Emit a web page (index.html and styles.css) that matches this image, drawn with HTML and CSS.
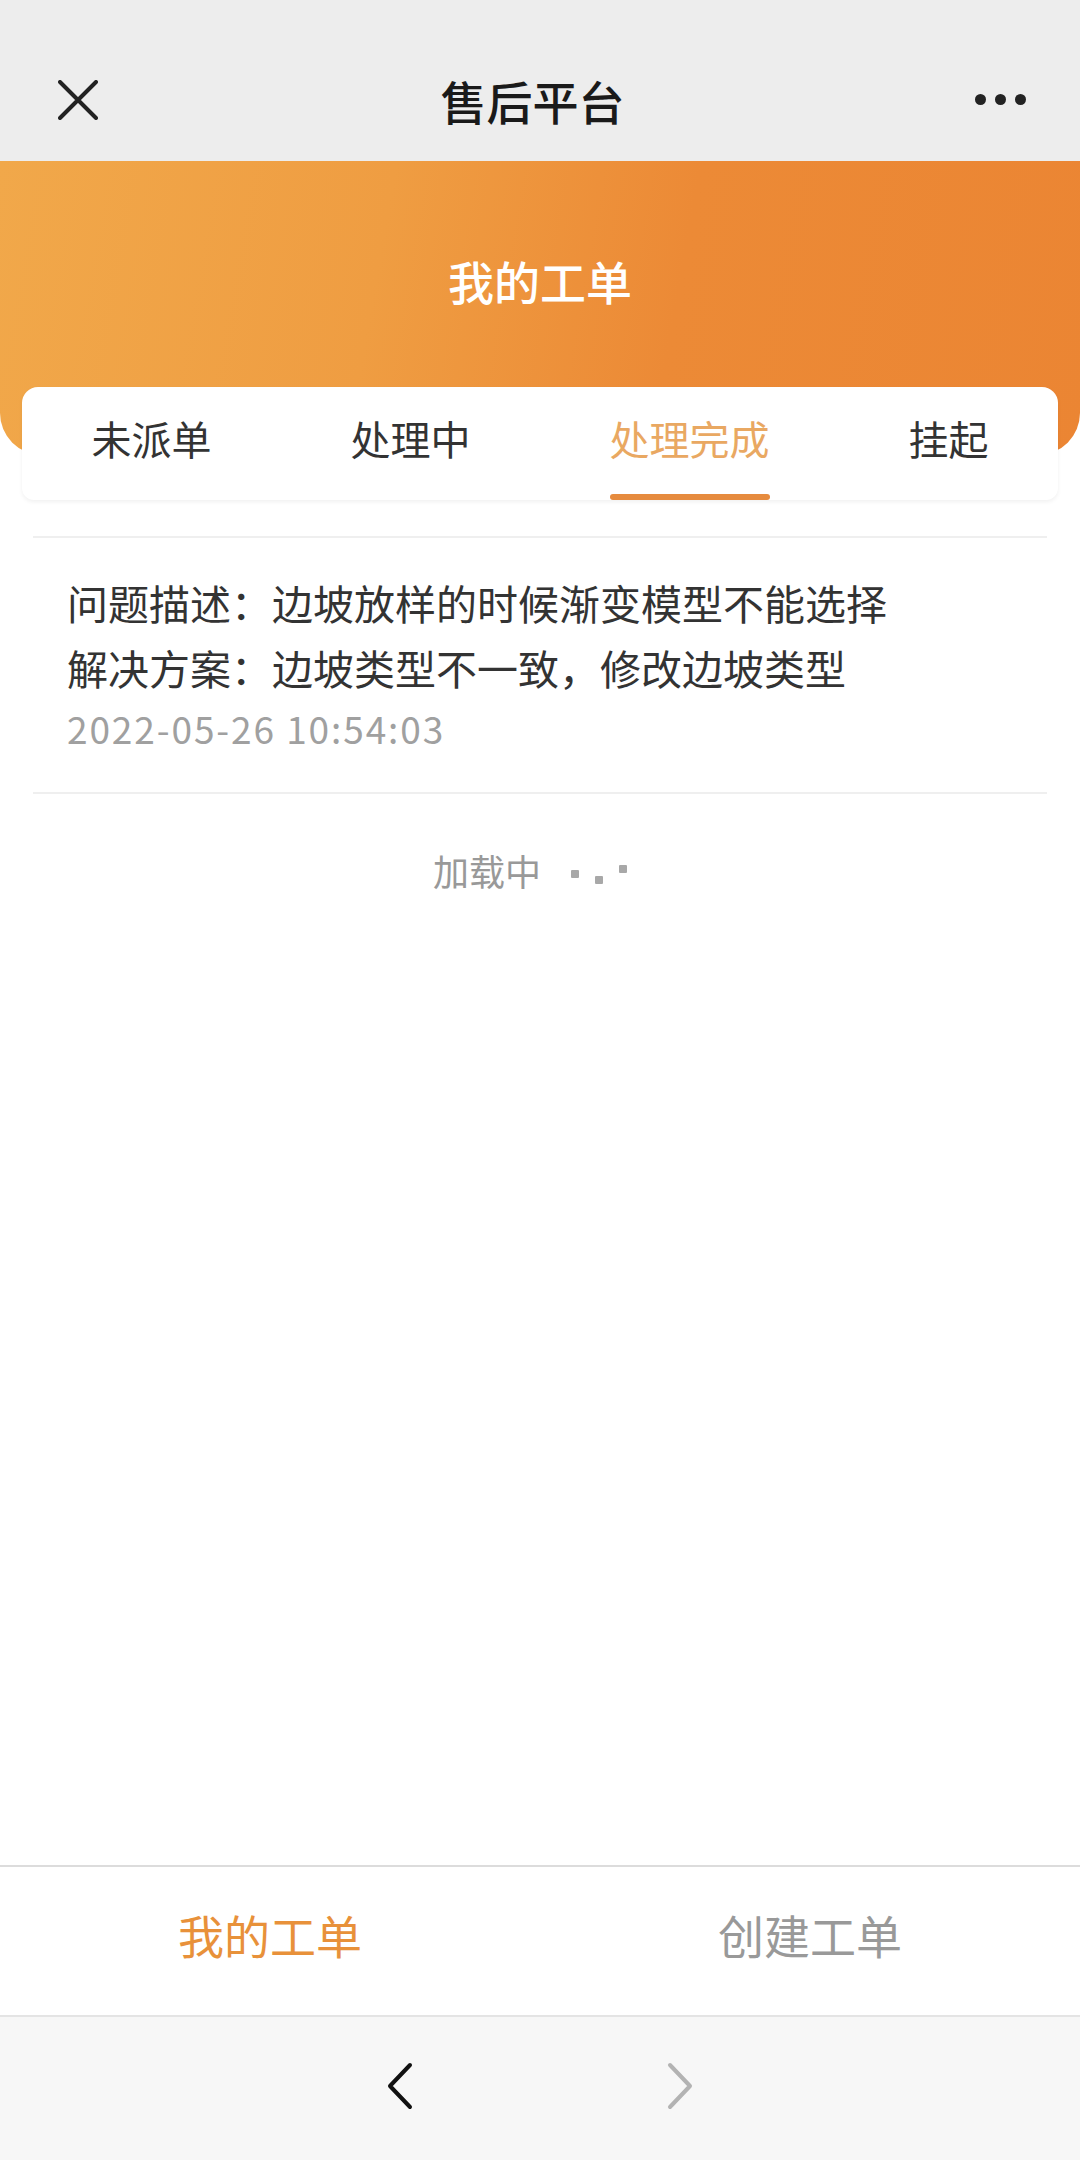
FILE: index.html
```html
<!DOCTYPE html>
<html lang="zh-CN">
<head>
  <meta charset="UTF-8" />
  <meta name="viewport" content="width=device-width, initial-scale=1.0"/>
  <title>售后平台</title>
  <link rel="stylesheet" href="styles.css">
</head>
<body>
<div class="page">

  <div class="navbar">
    <svg class="nav-close" width="40" height="40" viewBox="0 0 40 40">
      <path d="M2 2 L38 38 M38 2 L2 38" stroke="#222" stroke-width="4" stroke-linecap="round" fill="none"/>
    </svg>
    <div class="nav-title">售后平台</div>
    <div class="nav-more"><span></span><span></span><span></span></div>
  </div>

  <div class="banner">
    <div class="banner-title">我的工单</div>
  </div>

  <div class="tabs">
    <div class="tab">未派单<i></i></div>
    <div class="tab">处理中<i></i></div>
    <div class="tab active">处理完成<i></i></div>
    <div class="tab">挂起<i></i></div>
  </div>

  <div class="list">
    <div class="item">
      <div class="line">问题描述：边坡放样的时候渐变模型不能选择</div>
      <div class="line">解决方案：边坡类型不一致，修改边坡类型</div>
      <div class="date">2022-05-26 10:54:03</div>
    </div>
    <div class="loading">
      加载中
      <span class="dots"><b class="d1"></b><b class="d2"></b><b class="d3"></b></span>
    </div>
  </div>

  <div class="tabbar">
    <div class="tabbar-item active">我的工单</div>
    <div class="tabbar-item">创建工单</div>
  </div>

  <div class="toolbar">
    <svg width="28" height="48" viewBox="0 0 28 48">
      <path d="M24 3 L4 24 L24 45" stroke="#111" stroke-width="4" stroke-linecap="round" stroke-linejoin="round" fill="none"/>
    </svg>
    <svg width="28" height="48" viewBox="0 0 28 48">
      <path d="M4 3 L24 24 L4 45" stroke="#b3b3b3" stroke-width="4" stroke-linecap="round" stroke-linejoin="round" fill="none"/>
    </svg>
  </div>

</div>
</body>
</html>
```

FILE: styles.css
```css
body {
  margin: 0;
  font-family: "Noto Sans CJK SC", "Noto Sans", sans-serif;
  background: #fff;
  color: #333;
}
.page {
  display: flex;
  flex-direction: column;
  height: 2160px;
  overflow: hidden;
}

/* top bar */
.navbar {
  height: 161px;
  flex-shrink: 0;
  background: #ededed;
  display: flex;
  align-items: center;
  padding: 38px 54px 0 58px;
  box-sizing: border-box;
}
.nav-close {
  flex-shrink: 0;
}
.nav-title {
  flex: 1;
  text-align: center;
  font-size: 46px;
  font-weight: 500;
  color: #1a1a1a;
  margin-right: 8px;
}
.nav-more {
  display: flex;
  gap: 9px;
}
.nav-more span {
  width: 11px;
  height: 11px;
  border-radius: 50%;
  background: #222;
}

/* orange header */
.banner {
  height: 294px;
  flex-shrink: 0;
  background: linear-gradient(100deg, #f1a84a 0%, #ef9d42 35%, #ec8a36 62%, #eb8533 100%);
  border-radius: 0 0 42px 42px;
  display: flex;
  justify-content: center;
  padding-top: 90px;
  box-sizing: border-box;
}
.banner-title {
  font-size: 46px;
  line-height: 58px;
  font-weight: 500;
  color: #fff;
}

/* tabs card */
.tabs {
  margin: -68px 22px 0;
  height: 113px;
  flex-shrink: 0;
  background: #fff;
  border-radius: 16px 16px 12px 12px;
  box-shadow: 0 2px 4px rgba(0,0,0,0.06);
  display: flex;
  justify-content: space-around;
}
.tab {
  display: flex;
  flex-direction: column;
  align-items: stretch;
  padding-top: 31px;
  font-size: 40px;
  line-height: 40px;
  color: #333;
}
.tab i {
  display: block;
  height: 6px;
  margin-top: 36px;
  border-radius: 3px;
}
.tab.active {
  color: #e9a862;
}
.tab.active i {
  background: #e68b3e;
}

/* list */
.list {
  flex: 1;
  margin: 36px 33px 0;
}
.item {
  border-top: 2px solid #efefef;
  border-bottom: 2px solid #efefef;
  padding: 32px 34px 36px;
}
.line {
  font-size: 41px;
  line-height: 65px;
  color: #333;
}
.date {
  font-size: 37px;
  line-height: 56px;
  letter-spacing: 1.9px;
  color: #a0a0a0;
}
.loading {
  padding: 51px 0 0;
  padding-right: 20px;
  text-align: center;
  font-size: 36px;
  line-height: 50px;
  color: #999;
}
.dots {
  display: inline-flex;
  gap: 16px;
  margin-left: 22px;
  vertical-align: middle;
}
.dots b {
  width: 8px;
  height: 8px;
  border-radius: 1px;
  background: #a8a8a8;
}
.dots .d1 { margin-top: 2px; }
.dots .d2 { margin-top: 8px; }
.dots .d3 { margin-top: -3px; }

/* bottom tab bar */
.tabbar {
  height: 152px;
  flex-shrink: 0;
  border-top: 2px solid #dcdcdc;
  border-bottom: 2px solid #e4e4e4;
  box-sizing: border-box;
  display: flex;
  background: #fff;
}
.tabbar-item {
  flex: 1;
  display: flex;
  align-items: center;
  justify-content: center;
  padding-bottom: 14px;
  font-size: 46px;
  color: #999;
}
.tabbar-item.active {
  color: #e8913a;
}

.toolbar {
  height: 143px;
  flex-shrink: 0;
  background: #f7f7f7;
  display: flex;
  justify-content: center;
  align-items: center;
  gap: 252px;
  padding-bottom: 6px;
  box-sizing: border-box;
}
```
